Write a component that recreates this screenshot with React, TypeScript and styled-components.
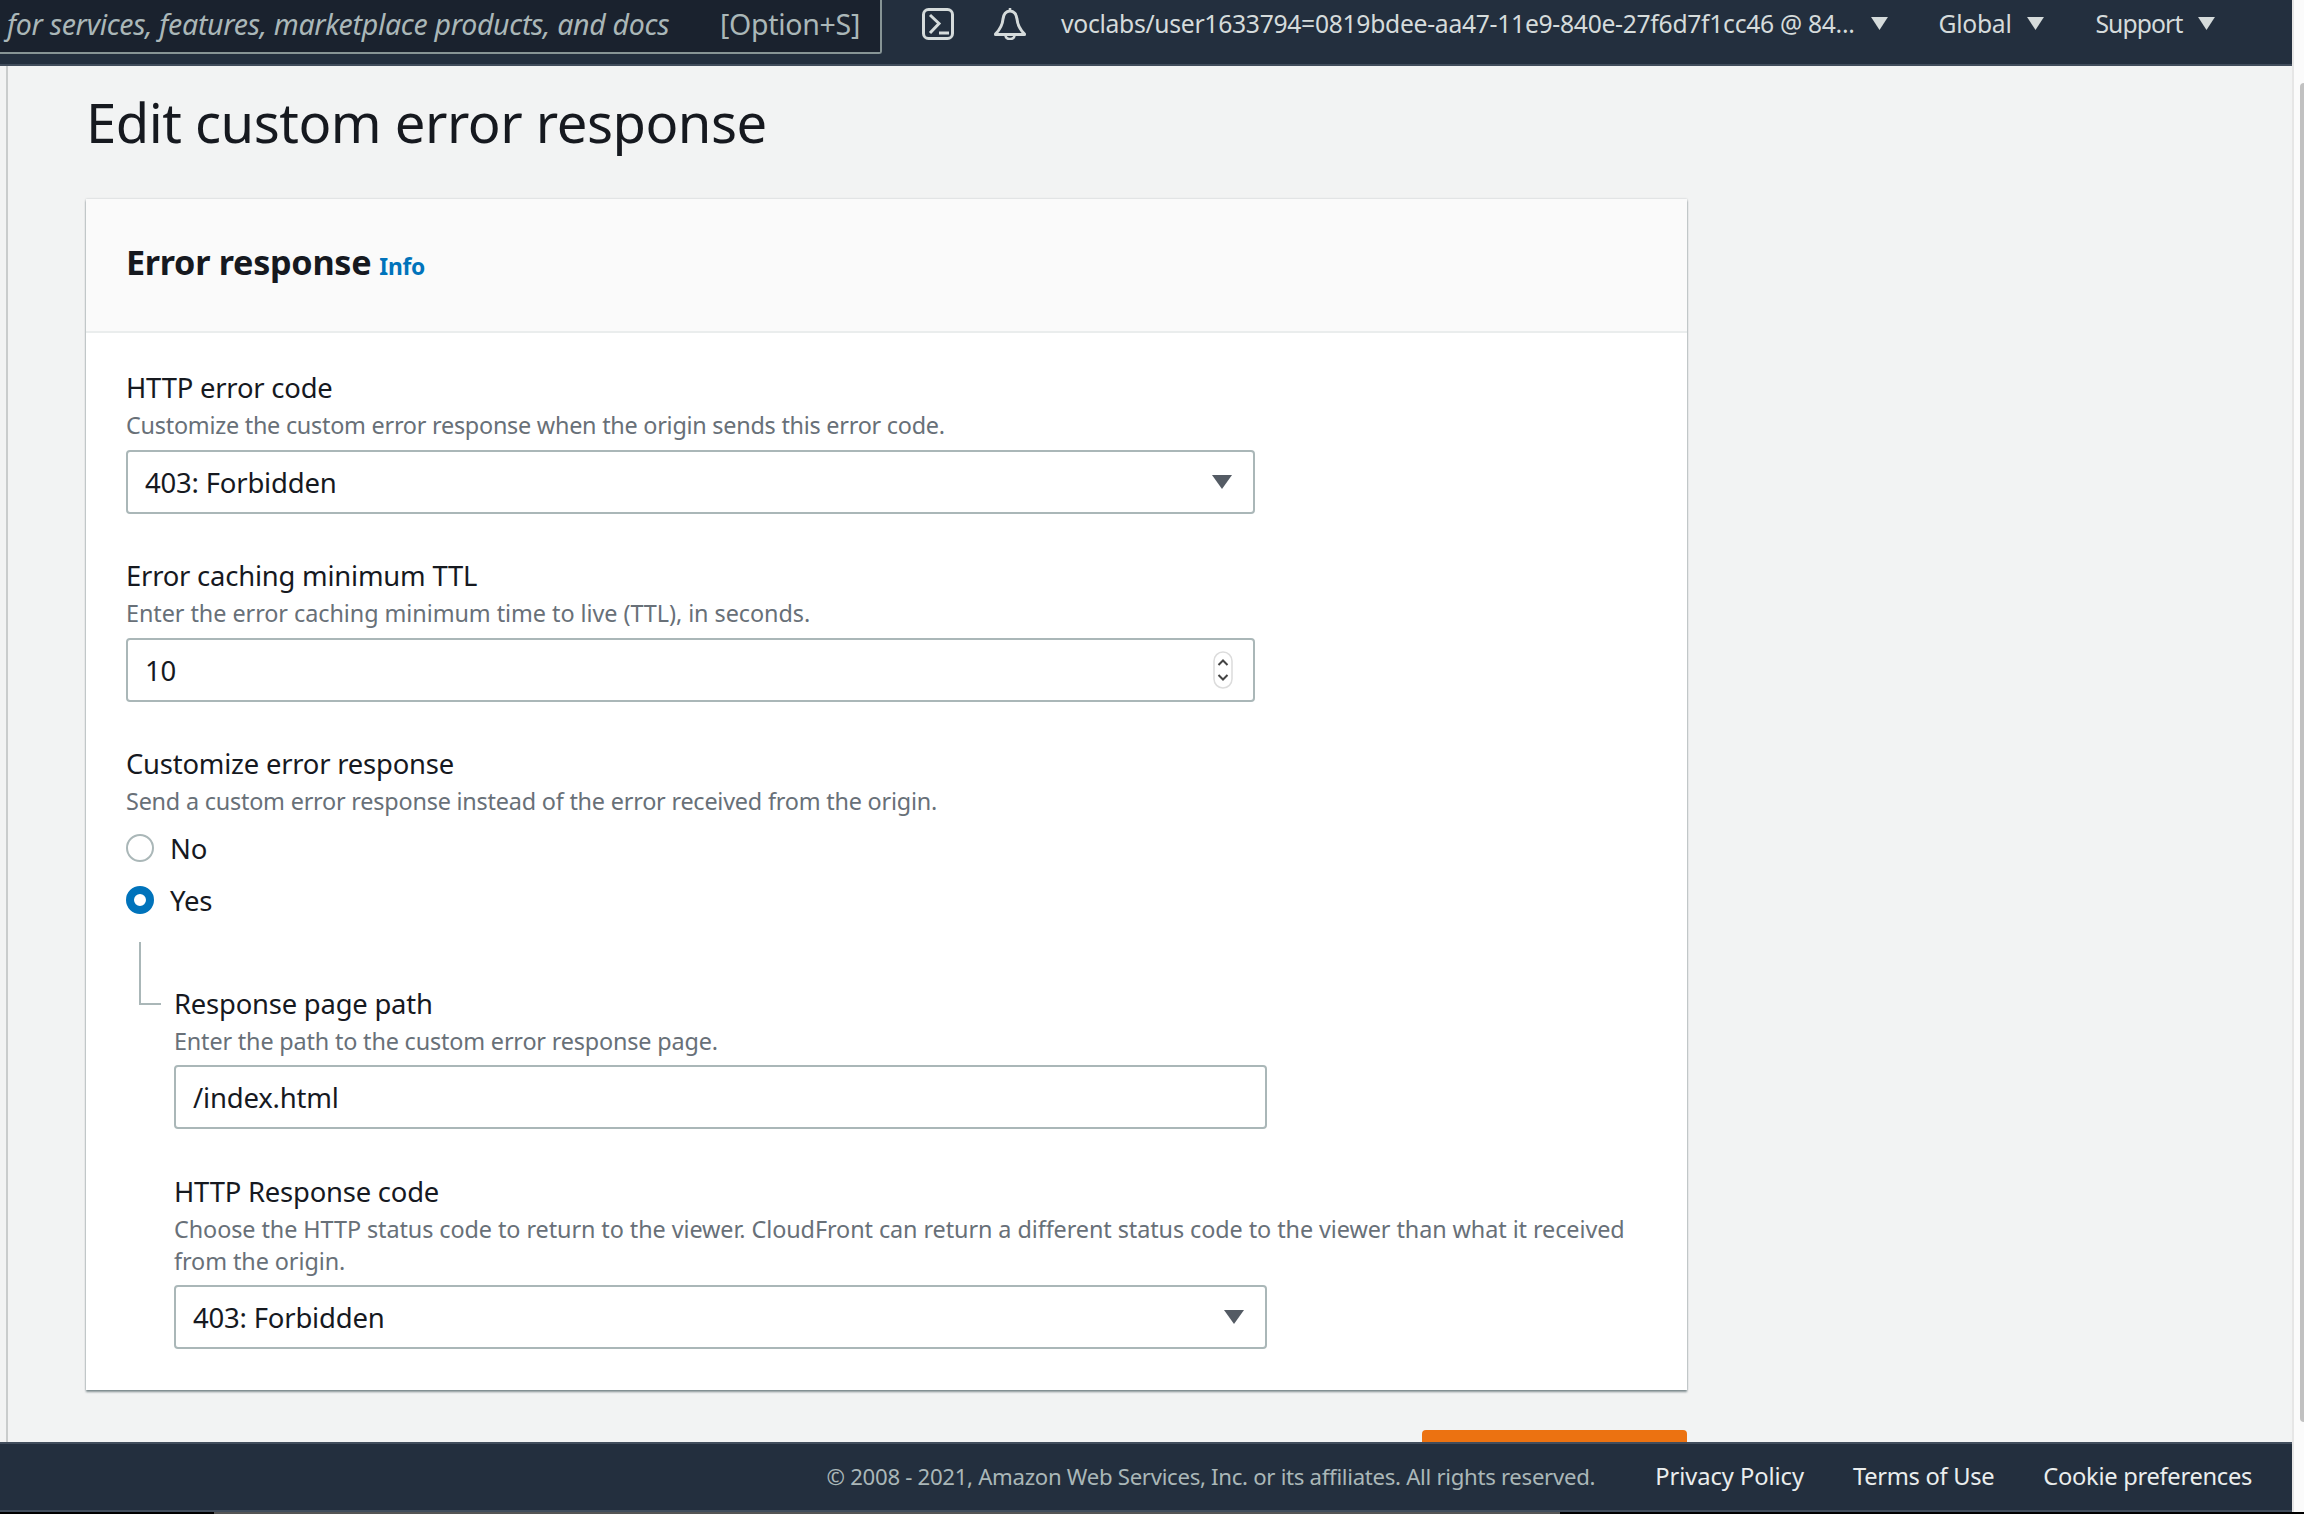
import styled, { createGlobalStyle } from 'styled-components';

const GlobalStyle = createGlobalStyle`
  html, body {
    margin: 0;
    padding: 0;
    background: #000;
  }
  * {
    box-sizing: border-box;
  }
`;

function Caret() {
  return (
    <CaretIcon viewBox="0 0 20 16">
      <path d="M1 1h18L10 15z" fill="currentColor" />
    </CaretIcon>
  );
}

function NavMenu({ children, tracking }: { children: string; tracking?: string }) {
  return (
    <NavItem $tracking={tracking}>
      <span>{children}</span>
      <Caret />
    </NavItem>
  );
}

function SelectBox({ value }: { value: string }) {
  return (
    <InputBox>
      <InputValue>{value}</InputValue>
      <SelectCaret viewBox="0 0 22 16">
        <path d="M1 1h20L11 15z" fill="currentColor" />
      </SelectCaret>
    </InputBox>
  );
}

function App() {
  return (
    <>
      <GlobalStyle />
      <Screen>
        <Window>
          <Frame>
            <Header>
              <SearchBox>
                <SearchHint>for services, features, marketplace products, and docs</SearchHint>
                <SearchKey>[Option+S]</SearchKey>
              </SearchBox>
              <ShellIcon viewBox="0 0 32 32">
                <rect x="1.500" y="1.500" width="29" height="29" rx="5" fill="none" stroke="currentColor" strokeWidth="3" />
                <path d="M8 7l9 8.500L8 25M17 25h10" fill="none" stroke="currentColor" strokeWidth="3" />
              </ShellIcon>
              <BellIcon viewBox="0 0 32 32">
                <path
                  d="M16 3c-4 0-6.500 3.500-7 8-.5 6-3.500 11-7.500 15v.5h29V26c-4-4-7-9-7.500-15-.5-4.500-3-8-7-8z"
                  fill="none"
                  stroke="currentColor"
                  strokeWidth="3"
                  strokeLinejoin="round"
                />
                <path d="M16 0v3M11.500 27c0 3 2 4 4.500 4s4.500-1 4.500-4" fill="none" stroke="currentColor" strokeWidth="2.500" />
              </BellIcon>
              <AccountMenu>
                <NavMenu>voclabs/user1633794=0819bdee-aa47-11e9-840e-27f6d7f1cc46 @ 84...</NavMenu>
              </AccountMenu>
              <NavMenu>Global</NavMenu>
              <NavMenu tracking="-0.9px">Support</NavMenu>
            </Header>

            <Main>
              <Title>Edit custom error response</Title>
              <Card>
                <CardHeader>
                  <CardTitle>Error response</CardTitle>
                  <InfoLink>Info</InfoLink>
                </CardHeader>
                <CardBody>
                  <Field>
                    <Label>HTTP error code</Label>
                    <Desc>Customize the custom error response when the origin sends this error code.</Desc>
                    <SelectBox value="403: Forbidden" />
                  </Field>

                  <Field>
                    <Label>Error caching minimum TTL</Label>
                    <Desc $tracking="-0.06px">Enter the error caching minimum time to live (TTL), in seconds.</Desc>
                    <InputBox>
                      <InputValue>10</InputValue>
                      <Spinner viewBox="0 0 20 38">
                        <rect x="1" y="1" width="18" height="36" rx="9" fill="#fff" stroke="#dcdcdc" strokeWidth="1.500" />
                        <path d="M5.500 14L10 9.500l4.500 4.500M5.500 24l4.500 4.500 4.500-4.500" fill="none" stroke="#444" strokeWidth="2" />
                      </Spinner>
                    </InputBox>
                  </Field>

                  <Field>
                    <Label>Customize error response</Label>
                    <RadioDesc $tracking="-0.21px">
                      Send a custom error response instead of the error received from the origin.
                    </RadioDesc>
                    <RadioGroup>
                      <RadioRow>
                        <RadioDot />
                        <RadioLabel>No</RadioLabel>
                      </RadioRow>
                      <RadioRow>
                        <RadioDot $checked />
                        <RadioLabel>Yes</RadioLabel>
                      </RadioRow>
                    </RadioGroup>
                  </Field>

                  <Nested>
                    <NestedField>
                      <Label>Response page path</Label>
                      <Desc $tracking="-0.17px">Enter the path to the custom error response page.</Desc>
                      <InputBox>
                        <InputValue>/index.html</InputValue>
                      </InputBox>
                    </NestedField>
                    <NestedField>
                      <Label>HTTP Response code</Label>
                      <Desc $tracking="-0.08px">
                        Choose the HTTP status code to return to the viewer. CloudFront can return a different status code
                        to the viewer than what it received from the origin.
                      </Desc>
                      <SelectBox value="403: Forbidden" />
                    </NestedField>
                  </Nested>
                </CardBody>
              </Card>
              <Actions>
                <PrimaryButton />
              </Actions>
            </Main>

            <Footer>
              <Copyright>© 2008 - 2021, Amazon Web Services, Inc. or its affiliates. All rights reserved.</Copyright>
              <FooterLinks>
                <FooterLink $tracking="-0.05px">Privacy Policy</FooterLink>
                <FooterLink>Terms of Use</FooterLink>
                <FooterLink>Cookie preferences</FooterLink>
              </FooterLinks>
            </Footer>
          </Frame>
          <ScrollTrack>
            <ScrollThumb />
          </ScrollTrack>
        </Window>
        <DesktopEdge>
          <DesktopEdgeBar />
        </DesktopEdge>
      </Screen>
    </>
  );
}

export default App;

const Screen = styled.div`
  display: flex;
  flex-direction: column;
  width: 2304px;
  height: 1514px;
  overflow: hidden;
  background: #000;
  font-family: 'Noto Sans', 'Open Sans', sans-serif;
  color: #16191f;
`;

const Window = styled.div`
  display: flex;
  height: 1512px;
`;

const Frame = styled.div`
  display: flex;
  flex-direction: column;
  width: 2292px;
  height: 100%;
  background: #f2f3f3;
`;

const ScrollTrack = styled.div`
  width: 12px;
  padding: 83px 0 90px 6px;
  background: #fbfbfb;
  border-left: 2px solid #e6e6e6;
`;

const ScrollThumb = styled.div`
  width: 4px;
  height: 100%;
  border-radius: 4px 0 0 4px;
  background: #c1c1c1;
`;

const DesktopEdge = styled.div`
  flex: 1;
  padding-left: 214px;
`;

const DesktopEdgeBar = styled.div`
  width: 1346px;
  height: 100%;
  background: #555;
`;

const Header = styled.header`
  flex: none;
  display: flex;
  align-items: flex-start;
  height: 66px;
  background: #232f3e;
  border-bottom: 2px solid #414d5c;
  color: #d5dbdb;
  font-size: 24.700px;
  letter-spacing: -0.3px;
`;

const SearchBox = styled.div`
  flex: none;
  display: flex;
  align-items: center;
  justify-content: space-between;
  width: 882px;
  height: 54px;
  padding: 0 20px 4px 7px;
  background: #1a222e;
  border: 2px solid #879596;
  border-width: 0 2px 2px 0;
  border-radius: 0 0 3px 0;
  color: #aab7b8;
  font-size: 28.500px;
  white-space: nowrap;
`;

const SearchHint = styled.span`
  font-style: italic;
`;

const SearchKey = styled.span``;

const ShellIcon = styled.svg`
  flex: none;
  width: 32px;
  height: 32px;
  margin: 8px 0 0 40px;
  color: #d5dbdb;
`;

const BellIcon = styled.svg`
  flex: none;
  width: 32px;
  height: 32px;
  margin: 8px 0 0 40px;
  color: #d5dbdb;
`;

const AccountMenu = styled.div`
  flex: none;
  margin-left: 35px;
`;

const NavItem = styled.div<{ $tracking?: string }>`
  display: inline-flex;
  align-items: center;
  gap: 15px;
  height: 46px;
  margin-left: 50px;
  letter-spacing: ${(p) => p.$tracking ?? '-0.3px'};
  white-space: nowrap;

  ${AccountMenu} & {
    margin-left: 0;
  }
`;

const CaretIcon = styled.svg`
  width: 19px;
  height: 15px;
`;

const Main = styled.main`
  flex: 1;
  min-height: 0;
  overflow: hidden;
  margin-left: 6px;
  padding: 16px 605px 0 78px;
  background: #f2f3f3;
  border-left: 2px solid #c9cccc;
`;

const Title = styled.h1`
  margin: 0 0 37px;
  font-size: 54.400px;
  font-weight: 400;
  line-height: 80px;
  letter-spacing: -0.5px;
`;

const Card = styled.section`
  background: #fff;
  box-shadow: 0 2px 2px rgba(0, 28, 36, 0.45), 0 0 2px rgba(0, 28, 36, 0.2);
`;

const CardHeader = styled.div`
  display: flex;
  align-items: baseline;
  gap: 8px;
  height: 134px;
  padding: 38px 40px 0;
  background: #fafafa;
  border-bottom: 2px solid #eaeded;
`;

const CardTitle = styled.h2`
  margin: 0;
  font-size: 34.200px;
  font-weight: 700;
  line-height: 50px;
  letter-spacing: -0.3px;
`;

const InfoLink = styled.a`
  color: #0073bb;
  font-size: 22.800px;
  font-weight: 700;
  letter-spacing: -0.3px;
`;

const CardBody = styled.div`
  display: flex;
  flex-direction: column;
  gap: 40px;
  padding: 33px 40px 41px;
`;

const Field = styled.div`
  display: flex;
  flex-direction: column;
  width: 1129px;
`;

const Label = styled.div`
  font-size: 27.400px;
  line-height: 43px;
  letter-spacing: -0.2px;
`;

const Desc = styled.div<{ $tracking?: string }>`
  margin-bottom: 9px;
  color: #687078;
  font-size: 23.400px;
  line-height: 32px;
  letter-spacing: ${(p) => p.$tracking ?? '-0.25px'};
`;

const RadioDesc = styled(Desc)`
  margin-bottom: 17px;
`;

const InputBox = styled.div`
  display: flex;
  align-items: center;
  justify-content: space-between;
  height: 64px;
  padding: 0 20px 0 17px;
  background: #fff;
  border: 2px solid #aab7b8;
  border-radius: 4px;
`;

const InputValue = styled.span`
  font-size: 27.500px;
  letter-spacing: -0.2px;
`;

const SelectCaret = styled.svg`
  width: 22px;
  height: 16px;
  color: #545b64;
`;

const Spinner = styled.svg`
  width: 20px;
  height: 38px;
`;

const RadioGroup = styled.div`
  display: flex;
  flex-direction: column;
  gap: 24px;
`;

const RadioRow = styled.div`
  display: flex;
  align-items: center;
  gap: 16px;
  height: 28px;
`;

const RadioDot = styled.span<{ $checked?: boolean }>`
  flex: none;
  width: 28px;
  height: 28px;
  border-radius: 50%;
  background: #fff;
  border: ${(p) => (p.$checked ? '8px solid #0073bb' : '2px solid #aab7b8')};
`;

const RadioLabel = styled.span`
  font-size: 27.500px;
  letter-spacing: -0.2px;
`;

const Nested = styled.div`
  position: relative;
  display: flex;
  flex-direction: column;
  gap: 41px;
  margin-top: -12px;
  padding: 40px 0 0 48px;

  &::before {
    content: '';
    position: absolute;
    top: 0;
    left: 13px;
    width: 20px;
    height: 61px;
    border-left: 2px solid #aab7b8;
    border-bottom: 2px solid #aab7b8;
  }
`;

const NestedField = styled.div`
  display: flex;
  flex-direction: column;

  ${Desc} {
    margin-bottom: 8px;
  }

  ${InputBox} {
    width: 1093px;
  }
`;

const Actions = styled.div`
  display: flex;
  justify-content: flex-end;
  margin-top: 40px;
`;

const PrimaryButton = styled.div`
  width: 265px;
  height: 64px;
  border-radius: 4px;
  background: #ec7211;
`;

const Footer = styled.footer`
  flex: none;
  display: flex;
  align-items: center;
  justify-content: flex-end;
  height: 70px;
  padding: 0 40px 2px 0;
  background: #232f3e;
  border-top: 2px solid #414d5c;
  border-bottom: 2px solid #414d5c;
  letter-spacing: -0.3px;
`;

const Copyright = styled.span`
  color: #aab7b8;
  font-size: 22.200px;
`;

const FooterLinks = styled.div`
  display: flex;
  gap: 49px;
  margin-left: 60px;
`;

const FooterLink = styled.a<{ $tracking?: string }>`
  color: #eaeded;
  font-size: 23.700px;
  letter-spacing: ${(p) => p.$tracking ?? '-0.3px'};
`;
